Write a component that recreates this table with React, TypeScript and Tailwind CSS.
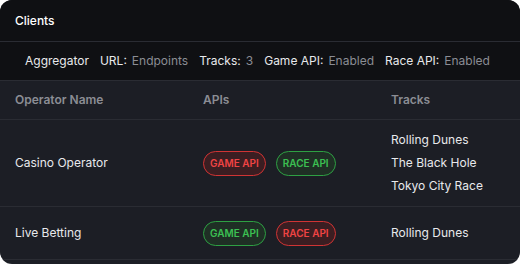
const clients = [
  {
    name: "Casino Operator",
    game: false,
    race: true,
    tracks: ["Rolling Dunes", "The Black Hole", "Tokyo City Race"],
  },
  {
    name: "Live Betting",
    game: true,
    race: false,
    tracks: ["Rolling Dunes"],
  },
];

function ApiBadge({ label, on }: { label: string; on: boolean }) {
  return (
    <span
      className={
        on
          ? "inline-flex h-[25px] items-center rounded-full border border-[#2ea043] bg-[#1f2f25] px-[6px] text-[10px] font-semibold text-[#3cc052]"
          : "inline-flex h-[25px] items-center rounded-full border border-[#d03434] bg-[#3b1e22] px-[6px] text-[10px] font-semibold text-[#f04444]"
      }
    >
      {label}
    </span>
  );
}

function Info({ label, value }: { label: string; value?: string }) {
  return (
    <span className="flex items-center gap-[5px] whitespace-nowrap">
      <span className="text-[#e8e9ec]">{label}</span>
      {value && <span className="text-[#8b8d94]">{value}</span>}
    </span>
  );
}

export default function App() {
  return (
    <main
      className="h-[264px] w-[520px] overflow-hidden rounded-xl bg-[#1c1e25] text-[12px] text-[#e8e9ec]"
      style={{ fontFamily: "Inter, 'Liberation Sans', sans-serif" }}
    >
      {/* header */}
      <div className="flex h-[42px] items-center border-b border-[#2a2c33] bg-[#0f1013] px-[15px] font-medium text-white">
        Clients
      </div>

      {/* summary */}
      <div className="flex h-[39px] items-center gap-[11px] border-b border-[#2a2c33] bg-[#0f1013] px-[25px]">
        <Info label="Aggregator" />
        <Info label="URL:" value="Endpoints" />
        <Info label="Tracks:" value="3" />
        <Info label="Game API:" value="Enabled" />
        <Info label="Race API:" value="Enabled" />
      </div>

      {/* table head */}
      <div className="grid h-[39px] grid-cols-[188px_188px_1fr] items-center border-b border-[#2a2c33] px-[15px] font-semibold text-[#8b8d94]">
        <span>Operator Name</span>
        <span>APIs</span>
        <span>Tracks</span>
      </div>

      {/* rows */}
      {clients.map((c) => (
        <div
          key={c.name}
          className="grid grid-cols-[188px_188px_1fr] items-center border-b border-[#2a2c33] px-[15px] py-3"
        >
          <span>{c.name}</span>
          <div className="flex h-7 items-center gap-[10px]">
            <ApiBadge label="GAME API" on={c.game} />
            <ApiBadge label="RACE API" on={c.race} />
          </div>
          <div className="flex flex-col gap-[7px] leading-4">
            {c.tracks.map((t) => (
              <span key={t}>{t}</span>
            ))}
          </div>
        </div>
      ))}
    </main>
  );
}
